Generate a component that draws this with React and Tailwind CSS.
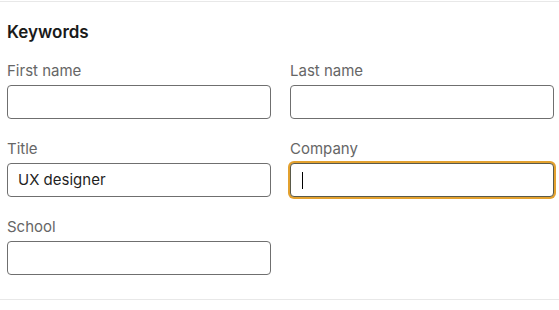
import React from "react";

const Field = ({ label, value = "", focused = false }) => (
  <div className="flex flex-col">
    <label className="text-[15px] leading-5 text-[#666666] mb-[4px]">{label}</label>
    <div
      className={
        "h-[34px] rounded-[4px] border bg-white flex items-center px-[10px] " +
        (focused
          ? "border-[#5a5a4a] shadow-[0_0_0_2px_#e3a12f]"
          : "border-[#6f6f6f]")
      }
    >
      {value && <span className="text-[15px] text-[#1f1f1f]">{value}</span>}
      {focused && <span className="w-px h-[17px] bg-black ml-px" />}
    </div>
  </div>
);

export default function App() {
  return (
    <div
      className="w-[559px] h-[310px] bg-white pt-px"
      style={{ fontFamily: "Inter, 'Liberation Sans', sans-serif" }}
    >
      <div className="border-t border-b border-[#e8e8e8] pt-[18px] pb-6 pl-[7px] pr-[5px]">
        <h2 className="text-[17px] leading-6 font-semibold text-[#1a1a1a] mb-[17px]">Keywords</h2>
        <div className="grid grid-cols-2 gap-x-[19px] gap-y-[20px]">
          <Field label="First name" />
          <Field label="Last name" />
          <Field label="Title" value="UX designer" />
          <Field label="Company" focused />
          <Field label="School" />
        </div>
      </div>
    </div>
  );
}
